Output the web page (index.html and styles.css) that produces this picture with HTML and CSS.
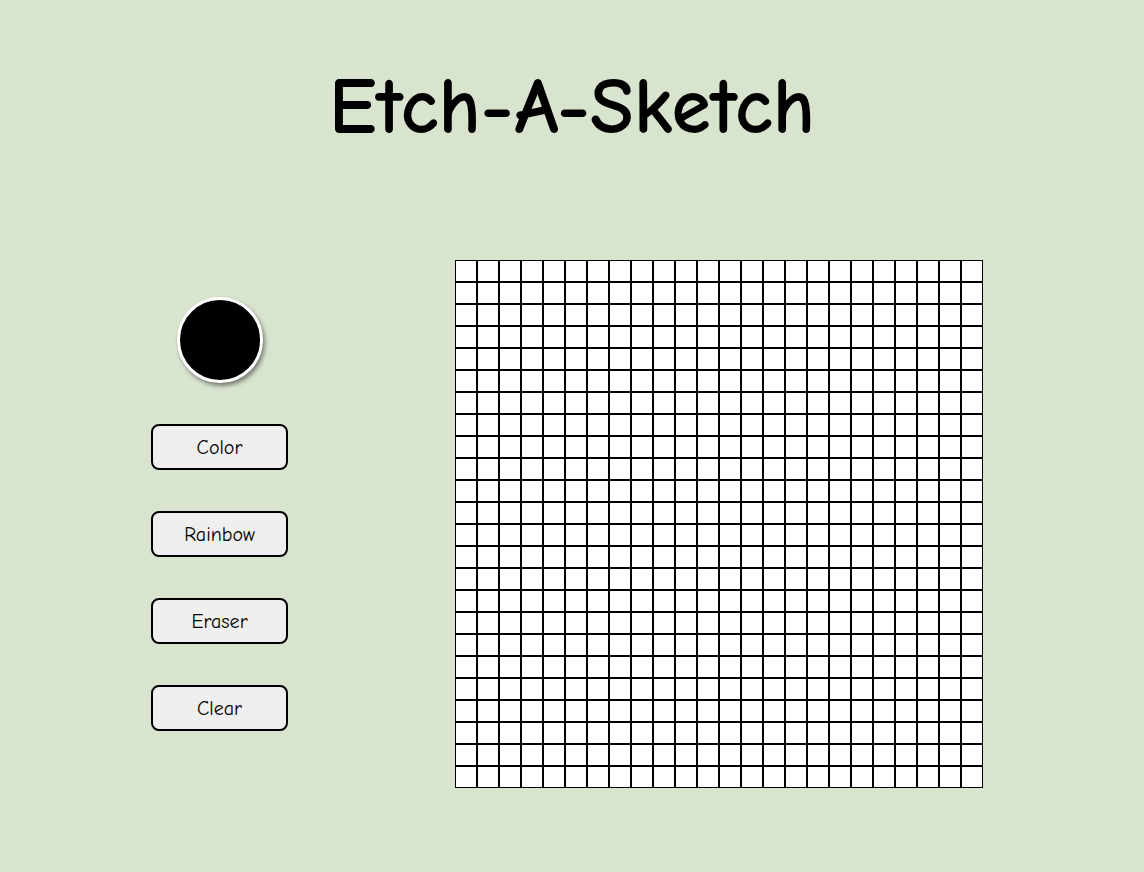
FILE: index.html
```html
<!DOCTYPE html>
<html lang="en">
<head>
<meta charset="utf-8">
<title>Etch-A-Sketch</title>
<link rel="stylesheet" href="styles.css">
</head>
<body>
<h1 class="title">Etch-A-Sketch</h1>
<main class="layout">
  <section class="controls">
    <div class="picker"></div>
    <button class="btn">Color</button>
    <button class="btn">Rainbow</button>
    <button class="btn">Eraser</button>
    <button class="btn">Clear</button>
  </section>
  <section class="board" id="board"></section>
</main>
<script>
const board = document.getElementById('board');
for (let i = 0; i < 576; i++) {
  const c = document.createElement('div');
  c.className = 'cell';
  board.appendChild(c);
}
</script>
</body>
</html>
```

FILE: styles.css
```css
* { box-sizing: border-box; }
html, body { margin: 0; padding: 0; }
body {
  background: #d9e4cf;
  font-family: "Comic Sans MS", "Comic Neue", "Chalkboard SE", cursive, sans-serif;
  color: #000;
  width: 1144px;
  height: 872px;
  overflow: hidden;
}
.title {
  margin: 0;
  padding-top: 62px;
  font-size: 80px;
  line-height: 90px;
  font-weight: bold;
  text-align: center;
}
.layout {
  display: flex;
  align-items: flex-start;
  padding-left: 151px;
  margin-top: 108px;
}
.controls {
  width: 137px;
  display: flex;
  flex-direction: column;
  align-items: center;
  gap: 41px;
  margin-top: 37px;
}
.picker {
  width: 86px;
  height: 86px;
  border-radius: 50%;
  border: 3px solid #fff;
  background: #000;
  box-shadow: 2px 3px 4px rgba(0,0,0,0.45);
}
.btn {
  width: 137px;
  height: 46px;
  border: 2px solid #000;
  border-radius: 8px;
  background: #efefef;
  font-family: inherit;
  font-size: 20px;
  font-weight: normal;
  color: #000;
  padding: 0;
}
.board {
  margin-left: 167px;
  display: grid;
  grid-template-columns: repeat(24, 22px);
  grid-auto-rows: 22px;
  background: #fff;
}
.cell {
  border: 1px solid #000;
  background: #fff;
}
```
